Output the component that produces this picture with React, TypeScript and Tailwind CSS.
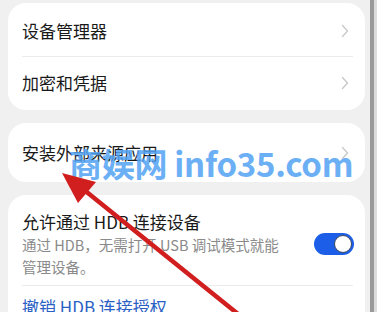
import React from 'react'

const font = { fontFamily: '"Noto Sans CJK SC", "Noto Sans", sans-serif' }

function Chevron() {
  return (
    <svg width="8" height="14" viewBox="0 0 8 14" className="shrink-0">
      <path d="M1.5 1.5 L6.5 7 L1.5 12.5" fill="none" stroke="#c8c8c8" strokeWidth="1.3" strokeLinecap="round" strokeLinejoin="round" />
    </svg>
  )
}

function Row({ label }: { label: string }) {
  return (
    <div className="flex items-center justify-between h-[51px] pr-[16px]">
      <span className="text-[17px] text-[#191919]">{label}</span>
      <Chevron />
    </div>
  )
}

export default function App() {
  return (
    <div className="relative w-[377px] h-[312px] overflow-hidden bg-[#f0f0f0] flex" style={font}>
      <div className="flex-1 flex flex-col gap-[13px] pl-2 pr-[5px] pt-[3px]">
        {/* Card 1 */}
        <div className="shrink-0 bg-white rounded-[18px] pl-[14px] py-[2px]">
          <Row label="设备管理器" />
          <div className="h-px bg-[#ececec] mr-[12px]" />
          <Row label="加密和凭据" />
        </div>

        {/* Card 2 */}
        <div className="shrink-0 bg-white rounded-[18px] pl-[14px] h-[59px] flex flex-col justify-center">
          <Row label="安装外部来源应用" />
        </div>

        {/* Card 3 */}
        <div className="shrink-0 bg-white rounded-t-[18px] pl-[14px] pt-[14px]">
          <div className="flex items-center pr-[11px]">
            <div className="flex-1">
              <div className="text-[17px] text-[#191919] leading-[25px]">允许通过 HDB 连接设备</div>
              <div className="text-[14.5px] text-[#8a8a8a] leading-[22px] w-[266px]">通过 HDB，无需打开 USB 调试模式就能管理设备。</div>
            </div>
            <div className="w-[40px] h-[22px] rounded-full bg-[#1d5ee8] flex items-center justify-end pr-[2px]">
              <div className="w-[18px] h-[18px] rounded-full bg-white border border-[#3a4660]" />
            </div>
          </div>
          <div className="h-px bg-[#ececec] mr-[12px] mt-[7px]" />
          <div className="text-[17px] text-[#2a5fc4] mt-[8px]">撤销 HDB 连接授权</div>
        </div>
      </div>

      {/* scrollbar edge */}
      <div className="w-[4px] bg-[#9a9a9a]" />
      <div className="w-[3px] bg-[#dcdcdc]" />

      {/* watermark */}
      <div className="absolute left-[69px] top-[142px] text-[33px] font-bold text-[#52a2f4] opacity-85 leading-[42px] whitespace-nowrap tracking-[-0.3px]">
        商娱网 info35.com
      </div>

      {/* red arrow */}
      <svg className="absolute left-0 top-0" width="377" height="312" viewBox="0 0 377 312">
        <line x1="238" y1="314" x2="78" y2="185" stroke="#d11f1f" strokeWidth="4.5" strokeLinecap="round" />
        <polygon points="62,173 96,182 78,203" fill="#d11f1f" />
      </svg>
    </div>
  )
}
